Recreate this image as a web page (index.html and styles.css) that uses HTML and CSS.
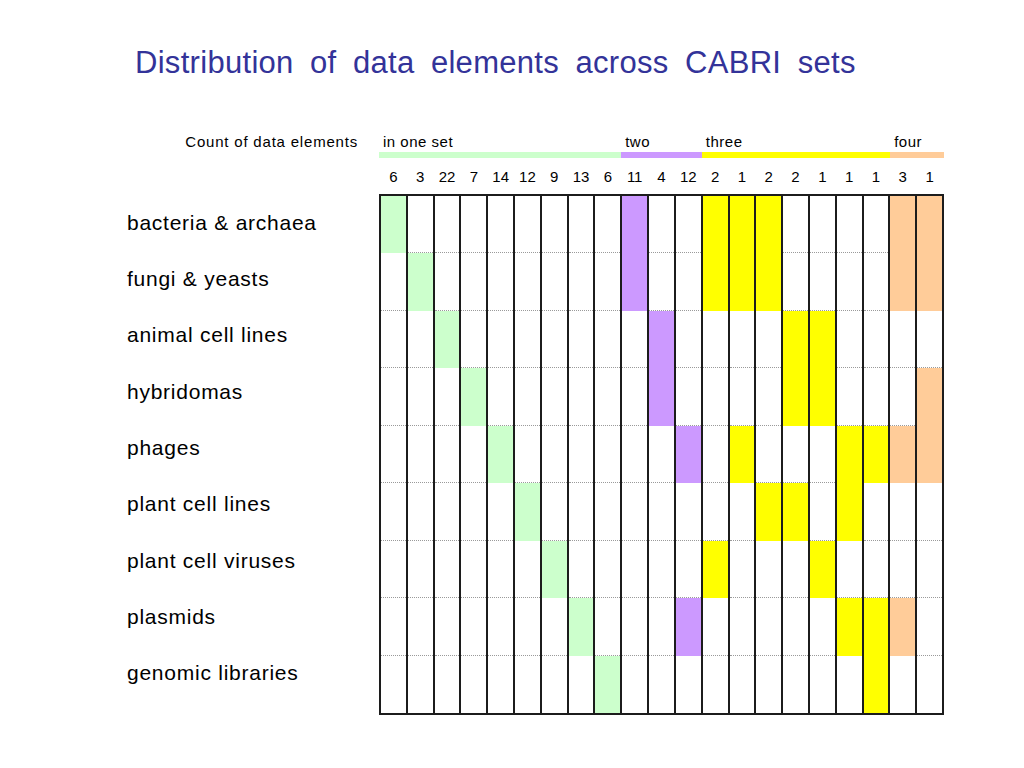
FILE: index.html
```html
<!DOCTYPE html>
<html lang="en">
<head>
<meta charset="utf-8">
<title>Distribution of data elements across CABRI sets</title>
<link rel="stylesheet" href="styles.css">
</head>
<body>
<h1 class="title">Distribution of data elements across CABRI sets</h1>
<div class="chart">
  <div class="count-label">Count of data elements</div>
  <div class="groups">
    <div class="group"><div class="group-label">in one set</div><div class="bar g"></div></div>
    <div class="group"><div class="group-label">two</div><div class="bar p"></div></div>
    <div class="group"><div class="group-label">three</div><div class="bar y"></div></div>
    <div class="group"><div class="group-label">four</div><div class="bar o"></div></div>
  </div>
  <div class="spacer"></div>
  <div class="counts">
    <span>6</span><span>3</span><span>22</span><span>7</span><span>14</span><span>12</span><span>9</span><span>13</span><span>6</span>
    <span>11</span><span>4</span><span>12</span>
    <span>2</span><span>1</span><span>2</span><span>2</span><span>1</span><span>1</span><span>1</span>
    <span>3</span><span>1</span>
  </div>
  <div class="row-labels">
    <div>bacteria &amp; archaea</div>
    <div>fungi &amp; yeasts</div>
    <div>animal cell lines</div>
    <div>hybridomas</div>
    <div>phages</div>
    <div>plant cell lines</div>
    <div>plant cell viruses</div>
    <div>plasmids</div>
    <div>genomic libraries</div>
  </div>
  <div class="matrix">
    <!-- bacteria & archaea -->
    <div class="cell g"></div><div class="cell"></div><div class="cell"></div><div class="cell"></div><div class="cell"></div><div class="cell"></div><div class="cell"></div><div class="cell"></div><div class="cell"></div><div class="cell p"></div><div class="cell"></div><div class="cell"></div><div class="cell y"></div><div class="cell y"></div><div class="cell y"></div><div class="cell"></div><div class="cell"></div><div class="cell"></div><div class="cell"></div><div class="cell o"></div><div class="cell o"></div>
    <!-- fungi & yeasts -->
    <div class="cell"></div><div class="cell g"></div><div class="cell"></div><div class="cell"></div><div class="cell"></div><div class="cell"></div><div class="cell"></div><div class="cell"></div><div class="cell"></div><div class="cell p"></div><div class="cell"></div><div class="cell"></div><div class="cell y"></div><div class="cell y"></div><div class="cell y"></div><div class="cell"></div><div class="cell"></div><div class="cell"></div><div class="cell"></div><div class="cell o"></div><div class="cell o"></div>
    <!-- animal cell lines -->
    <div class="cell"></div><div class="cell"></div><div class="cell g"></div><div class="cell"></div><div class="cell"></div><div class="cell"></div><div class="cell"></div><div class="cell"></div><div class="cell"></div><div class="cell"></div><div class="cell p"></div><div class="cell"></div><div class="cell"></div><div class="cell"></div><div class="cell"></div><div class="cell y"></div><div class="cell y"></div><div class="cell"></div><div class="cell"></div><div class="cell"></div><div class="cell"></div>
    <!-- hybridomas -->
    <div class="cell"></div><div class="cell"></div><div class="cell"></div><div class="cell g"></div><div class="cell"></div><div class="cell"></div><div class="cell"></div><div class="cell"></div><div class="cell"></div><div class="cell"></div><div class="cell p"></div><div class="cell"></div><div class="cell"></div><div class="cell"></div><div class="cell"></div><div class="cell y"></div><div class="cell y"></div><div class="cell"></div><div class="cell"></div><div class="cell"></div><div class="cell o"></div>
    <!-- phages -->
    <div class="cell"></div><div class="cell"></div><div class="cell"></div><div class="cell"></div><div class="cell g"></div><div class="cell"></div><div class="cell"></div><div class="cell"></div><div class="cell"></div><div class="cell"></div><div class="cell"></div><div class="cell p"></div><div class="cell"></div><div class="cell y"></div><div class="cell"></div><div class="cell"></div><div class="cell"></div><div class="cell y"></div><div class="cell y"></div><div class="cell o"></div><div class="cell o"></div>
    <!-- plant cell lines -->
    <div class="cell"></div><div class="cell"></div><div class="cell"></div><div class="cell"></div><div class="cell"></div><div class="cell g"></div><div class="cell"></div><div class="cell"></div><div class="cell"></div><div class="cell"></div><div class="cell"></div><div class="cell"></div><div class="cell"></div><div class="cell"></div><div class="cell y"></div><div class="cell y"></div><div class="cell"></div><div class="cell y"></div><div class="cell"></div><div class="cell"></div><div class="cell"></div>
    <!-- plant cell viruses -->
    <div class="cell"></div><div class="cell"></div><div class="cell"></div><div class="cell"></div><div class="cell"></div><div class="cell"></div><div class="cell g"></div><div class="cell"></div><div class="cell"></div><div class="cell"></div><div class="cell"></div><div class="cell"></div><div class="cell y"></div><div class="cell"></div><div class="cell"></div><div class="cell"></div><div class="cell y"></div><div class="cell"></div><div class="cell"></div><div class="cell"></div><div class="cell"></div>
    <!-- plasmids -->
    <div class="cell"></div><div class="cell"></div><div class="cell"></div><div class="cell"></div><div class="cell"></div><div class="cell"></div><div class="cell"></div><div class="cell g"></div><div class="cell"></div><div class="cell"></div><div class="cell"></div><div class="cell p"></div><div class="cell"></div><div class="cell"></div><div class="cell"></div><div class="cell"></div><div class="cell"></div><div class="cell y"></div><div class="cell y"></div><div class="cell o"></div><div class="cell"></div>
    <!-- genomic libraries -->
    <div class="cell"></div><div class="cell"></div><div class="cell"></div><div class="cell"></div><div class="cell"></div><div class="cell"></div><div class="cell"></div><div class="cell"></div><div class="cell g"></div><div class="cell"></div><div class="cell"></div><div class="cell"></div><div class="cell"></div><div class="cell"></div><div class="cell"></div><div class="cell"></div><div class="cell"></div><div class="cell"></div><div class="cell y"></div><div class="cell"></div><div class="cell"></div>
  </div>
</div>
</body>
</html>
```
FILE: styles.css
```css
html, body {
  margin: 0;
  background: #fff;
}
body {
  font-family: "Liberation Sans", Arial, sans-serif;
  color: #000;
}
.title {
  margin: 46px 0 0 135px;
  font-size: 31px;
  line-height: 34px;
  font-weight: normal;
  color: #333399;
  letter-spacing: 0.3px;
  word-spacing: 7.5px;
}
.chart {
  display: grid;
  grid-template-columns: 252px 565px;
  align-items: start;
  margin: 54px 0 0 127px;
}
.count-label {
  font-size: 15px;
  line-height: 16px;
  letter-spacing: 0.8px;
  text-align: right;
  padding-right: 21px;
}
.groups {
  display: grid;
  grid-template-columns: 9fr 3fr 7fr 2fr;
}
.group-label {
  font-size: 15px;
  line-height: 16px;
  letter-spacing: 0.5px;
  padding-left: 4px;
}
.bar {
  height: 6px;
  margin-top: 2px;
}
.counts {
  display: grid;
  grid-template-columns: repeat(21, 1fr);
  column-gap: 2px;
  padding: 11px 2px 9px;
  font-size: 15px;
  line-height: 16px;
  text-align: center;
}
.row-labels {
  display: grid;
  grid-template-rows: repeat(9, 1fr);
  align-items: center;
  height: 507px;
  font-size: 21px;
  line-height: 23px;
  letter-spacing: 0.75px;
}
.matrix {
  display: grid;
  grid-template-columns: repeat(21, 1fr);
  grid-template-rows: repeat(9, 1fr);
  column-gap: 2px;
  height: 521px;
  box-sizing: border-box;
  border: 2px solid #1c1c1c;
  background: #1c1c1c;
}
.cell {
  background: #fff;
  border-bottom: 1px dotted #9a9a9a;
}
.cell:nth-last-child(-n+21) {
  border-bottom: none;
}
.g { background: #ccffcc; }
.p { background: #cc99ff; }
.y { background: #ffff00; }
.o { background: #ffcc99; }
.cell.g, .cell.p, .cell.y, .cell.o {
  border-bottom-color: transparent;
}
```
